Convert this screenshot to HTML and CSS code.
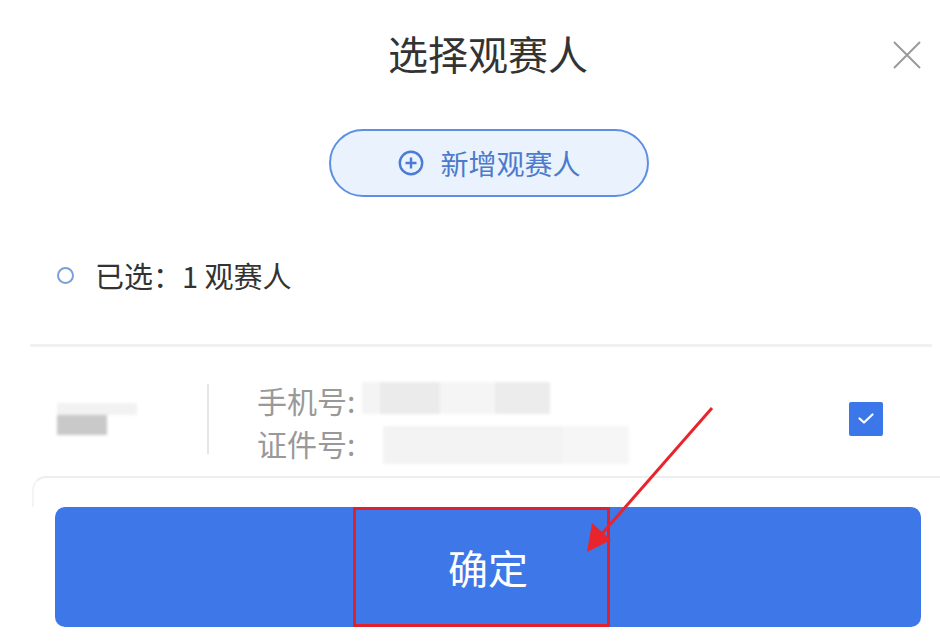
FILE: index.html
```html
<!DOCTYPE html>
<html lang="zh-CN">
<head>
<meta charset="utf-8">
<title>选择观赛人</title>
<link rel="stylesheet" href="styles.css">
</head>
<body>
<div class="page">
  <header class="header">
    <span></span>
    <h1 class="title">选择观赛人</h1>
    <button class="close" aria-label="关闭">
      <svg width="28" height="28" viewBox="0 0 28 28"><path d="M1 1L27 27M27 1L1 27" stroke="#9a9a9a" stroke-width="2" fill="none"/></svg>
    </button>
  </header>

  <div class="add-wrap">
    <button class="add-btn">
      <svg class="plus" width="26" height="26" viewBox="0 0 26 26"><circle cx="13" cy="13" r="11.2" stroke="#4a7bd6" stroke-width="2.4" fill="none"/><path d="M13 7.5V18.5M7.5 13H18.5" stroke="#4a7bd6" stroke-width="2.4"/></svg>
      <span>新增观赛人</span>
    </button>
  </div>

  <div class="selected">
    <span class="ring"></span>
    <span class="sel-text">已选：1 观赛人</span>
  </div>

  <div class="sep"></div>

  <div class="row">
    <div class="name-col">
      <span class="blur-name"><i class="bn1"></i><i class="bn2"></i></span>
    </div>
    <div class="divider"></div>
    <div class="info">
      <div class="line"><span class="label">手机号:</span><span class="blur blur-phone"><i class="p1"></i><i class="p2"></i><i class="p3"></i></span></div>
      <div class="line"><span class="label">证件号:</span><span class="blur blur-id"><i class="d1"></i><i class="d2"></i></span></div>
    </div>
    <span class="check">
      <svg width="18" height="13" viewBox="0 0 18 13"><path d="M2.5 6.5L7 10.5L15.5 2.5" stroke="#fff" stroke-width="2.2" fill="none" stroke-linecap="round" stroke-linejoin="round"/></svg>
    </span>
  </div>

  <div class="next-card"></div>

  <div class="footer">
    <button class="confirm">确定</button>
  </div>

  <svg class="annot" width="940" height="644" viewBox="0 0 940 644">
    <rect x="354.5" y="508.5" width="254" height="117" fill="none" stroke="#e0202a" stroke-width="3"/>
    <path d="M712 408L600 536" stroke="#e8242c" stroke-width="3" fill="none"/>
    <path d="M587 552L592 523L611 540Z" fill="#e8242c"/>
  </svg>
</div>
</body>
</html>
```

FILE: styles.css
```css
* { box-sizing: border-box; }
html, body { margin: 0; padding: 0; background: #fff; }
body {
  font-family: "Noto Sans CJK SC", "Noto Sans", sans-serif;
  color: #333;
  width: 940px;
  height: 644px;
  overflow: hidden;
}
.page { position: relative; width: 940px; height: 644px; }

.header {
  height: 110px;
  display: grid;
  grid-template-columns: 1fr auto 1fr;
  align-items: center;
}
.title {
  margin: 0 0 0 36px;
  font-size: 40px;
  font-weight: 400;
  color: #333;
  line-height: 1;
  position: relative;
  top: -2px;
}
.close {
  justify-self: end;
  margin-right: 19px;
  border: 0;
  background: none;
  padding: 0;
  width: 28px;
  height: 28px;
  display: flex;
}

.add-wrap {
  display: flex;
  justify-content: center;
  padding-top: 19px;
  padding-left: 37px;
}
.add-btn {
  width: 320px;
  height: 68px;
  border-radius: 34px;
  border: 2px solid #5d90e2;
  background: #eaf2fd;
  display: flex;
  align-items: center;
  justify-content: center;
  gap: 16px;
  font-family: inherit;
  font-size: 28px;
  color: #4c7acc;
  padding: 0 0 0 2px;
}
.add-btn span { line-height: 1; }

.selected {
  display: flex;
  align-items: center;
  margin-top: 58px;
  padding-left: 57px;
  height: 40px;
}
.ring {
  width: 17px;
  height: 17px;
  border: 2px solid #7b9fd9;
  border-radius: 50%;
  margin-right: 21px;
}
.sel-text {
  font-size: 29px;
  color: #333;
  line-height: 1;
}

.sep {
  margin: 49px 8px 0 30px;
  height: 3px;
  background: #f1f1f1;
}

.row {
  height: 129px;
  display: flex;
  align-items: center;
  padding: 14px 57px 0 57px;
}
.name-col {
  width: 150px;
  display: flex;
  align-items: center;
}
.blur-name {
  display: block;
  width: 80px;
  height: 36px;
  filter: blur(1.5px);
  margin-top: 4px;
}
.blur-name i { display: block; }
.bn1 { width: 80px; height: 12px; background: #f2f2f2; }
.bn2 { width: 50px; height: 20px; background: #c9c9c9; }

.divider {
  width: 2px;
  height: 70px;
  background: #e6e6e6;
}
.info {
  margin-left: 48px;
  margin-top: 6px;
  display: flex;
  flex-direction: column;
  gap: 3px;
}
.line {
  display: flex;
  align-items: center;
  height: 40px;
}
.label {
  font-size: 30px;
  color: #999;
  line-height: 1;
  width: 108px;
}
.blur {
  display: flex;
  filter: blur(1.5px);
}
.blur i { display: block; }
.blur-phone { margin-left: -3px; height: 32px; margin-top: -4px; }
.p1 { width: 18px; background: #f4f4f4; }
.p2 { width: 60px; background: #ebebeb; }
.p3 { width: 110px; background: linear-gradient(90deg, #f5f5f5 0 50%, #ececec 50% 100%); }
.blur-id { margin-left: 18px; height: 38px; margin-top: 4px; }
.d1 { width: 180px; background: #f3f3f3; }
.d2 { width: 66px; background: #f6f6f6; }

.check {
  margin-left: auto;
  width: 34px;
  height: 34px;
  background: #3b77e8;
  border-radius: 2px;
  display: flex;
  align-items: center;
  justify-content: center;
}

.next-card {
  margin-left: 32px;
  height: 31px;
  border-top: 2px solid #eeeeee;
  border-left: 2px solid #f4f4f4;
  border-top-left-radius: 14px;
}
.footer {
  padding: 0 19px 0 55px;
}
.confirm {
  width: 100%;
  height: 120px;
  border: 0;
  border-radius: 10px;
  background: #3e78e8;
  color: #fff;
  font-family: inherit;
  font-size: 40px;
  line-height: 1;
  padding: 0;
}

.annot {
  position: absolute;
  left: 0;
  top: 0;
  pointer-events: none;
}
```
